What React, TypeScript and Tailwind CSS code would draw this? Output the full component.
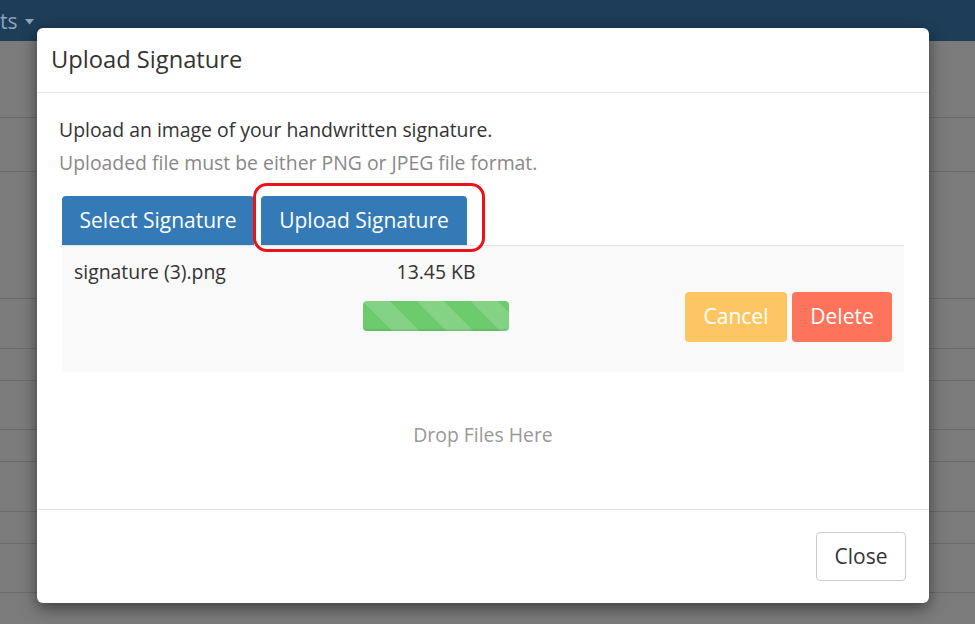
const rowLines = [77, 54, 127, 50, 32, 49, 32, 50, 32, 49];

function BackgroundPage() {
  return (
    <div className="flex flex-col">
      <div className="h-[41px] bg-[#1d3d58] flex items-center overflow-hidden">
        <span className="text-[21px] leading-[24px] text-[#8fa4b8]">ts</span>
        <svg className="ml-[7px] mt-[2px]" width="9" height="6" viewBox="0 0 9 6">
          <path d="M0 0 L9 0 L4.5 5.5 Z" fill="#8fa4b8" />
        </svg>
      </div>
      {rowLines.map((h, i) => (
        <div key={i} className="border-b border-[#6a6a6a]" style={{ height: h }} />
      ))}
    </div>
  );
}

export default function App() {
  return (
    <div
      className="relative w-[975px] h-[624px] overflow-hidden bg-[#7b7b7b] text-[#333]"
      style={{ fontFamily: '"Open Sans", "Noto Sans", sans-serif' }}
    >
      <BackgroundPage />

      <div className="absolute left-[37px] top-[28px] w-[892px] h-[575px] rounded-[6px] bg-white shadow-[0_5px_15px_rgba(0,0,0,0.5)] flex flex-col">
        <div className="h-[65px] border-b border-[#e5e5e5] flex items-center px-[14px]">
          <h4 className="text-[23.7px] text-[#333]">Upload Signature</h4>
        </div>

        <div className="px-[22px] pt-[24px] pb-[10px] flex flex-col">
          <p className="text-[19.4px] leading-[26px] text-[#333]">Upload an image of your handwritten signature.</p>
          <p className="mt-[7px] text-[19.4px] leading-[26px] text-[#888]">Uploaded file must be either PNG or JPEG file format.</p>

          <div className="mt-[20px] mx-[3px] flex flex-col">
            <div className="flex gap-[7px]">
              <button className="w-[192px] h-[49px] rounded-t-[4px] bg-[#337ab7] text-white text-[21px]">Select Signature</button>
              <div className="relative">
                <button className="w-[206px] h-[49px] rounded-t-[4px] bg-[#337ab7] text-white text-[21px]">Upload Signature</button>
                <div className="absolute -left-[8px] -top-[13px] -right-[18px] -bottom-[7px] rounded-[14px] border-[3px] border-[#e8141a]" />
              </div>
            </div>

            <div className="h-[127px] bg-[#f9f9f9] border-t border-[#e3e3e3] flex items-start px-[12px] pt-[13px]">
              <div className="w-[289px] text-[19.4px] leading-[26px]">signature (3).png</div>
              <div className="w-[146px] flex flex-col items-center">
                <div className="text-[19.4px] leading-[26px]">13.45 KB</div>
                <div className="mt-[16px] w-[146px] h-[30px] rounded-[4px] bg-[#6ccb6c] bg-[linear-gradient(45deg,rgba(255,255,255,.16)_25%,transparent_25%,transparent_50%,rgba(255,255,255,.16)_50%,rgba(255,255,255,.16)_75%,transparent_75%,transparent)] bg-[length:54px_54px] shadow-[inset_0_-2px_0_rgba(0,0,0,0.08)]" />
              </div>
              <div className="flex-1 flex justify-end gap-[5px] pt-[33px]">
                <button className="w-[102px] h-[50px] rounded-[4px] bg-[#fdc662] text-white text-[21px]">Cancel</button>
                <button className="w-[100px] h-[50px] rounded-[4px] bg-[#fe735b] text-white text-[21px]">Delete</button>
              </div>
            </div>

            <div className="h-[126px] flex items-center justify-center">
              <span className="text-[19.4px] text-[#999]">Drop Files Here</span>
            </div>
          </div>
        </div>

        <div className="mt-auto h-[94px] border-t border-[#e5e5e5] flex items-center justify-end px-[23px]">
          <button className="w-[90px] h-[49px] rounded-[4px] border border-[#ccc] bg-white text-[21px] text-[#333]">Close</button>
        </div>
      </div>
    </div>
  );
}
